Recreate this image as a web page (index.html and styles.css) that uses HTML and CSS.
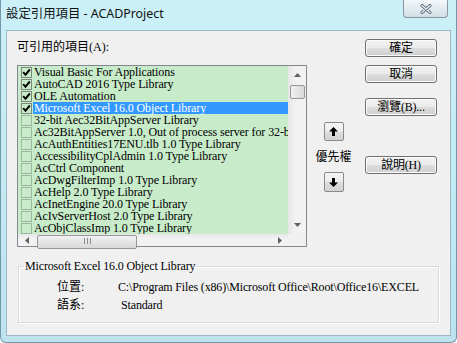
FILE: index.html
```html
<!DOCTYPE html>
<html>
<head>
<meta charset="utf-8">
<link rel="stylesheet" href="styles.css">
</head>
<body>
<div class="window">
  <div class="titlebar">
    <span class="title">設定引用項目 - ACADProject</span>
    <div class="close">
      <svg width="12" height="10" viewBox="0 0 12 10"><path d="M2 1.5 L10 8.5 M10 1.5 L2 8.5" stroke="#5d6c78" stroke-width="3" stroke-linecap="round"/><path d="M2 1.5 L10 8.5 M10 1.5 L2 8.5" stroke="#f4f6f8" stroke-width="1.2" stroke-linecap="round"/></svg>
    </div>
  </div>
  <div class="client">
    <div class="top">
      <div class="left">
        <div class="label">可引用的項目(A):</div>
        <div class="listbox">
          <div class="listmain">
            <div class="rows">
              <div class="row"><span class="cb on"><svg width="9" height="9" viewBox="0 0 9 9"><path d="M1.2 4.2 L3.5 6.8 L7.8 1.5" fill="none" stroke="#000" stroke-width="2"/></svg></span><span class="txt">Visual Basic For Applications</span></div>
              <div class="row"><span class="cb on"><svg width="9" height="9" viewBox="0 0 9 9"><path d="M1.2 4.2 L3.5 6.8 L7.8 1.5" fill="none" stroke="#000" stroke-width="2"/></svg></span><span class="txt">AutoCAD 2016 Type Library</span></div>
              <div class="row"><span class="cb on"><svg width="9" height="9" viewBox="0 0 9 9"><path d="M1.2 4.2 L3.5 6.8 L7.8 1.5" fill="none" stroke="#000" stroke-width="2"/></svg></span><span class="txt">OLE Automation</span></div>
              <div class="row sel"><span class="cb on"><svg width="9" height="9" viewBox="0 0 9 9"><path d="M1.2 4.2 L3.5 6.8 L7.8 1.5" fill="none" stroke="#000" stroke-width="2"/></svg></span><span class="txt">Microsoft Excel 16.0 Object Library</span></div>
              <div class="row"><span class="cb"></span><span class="txt">32-bit Aec32BitAppServer Library</span></div>
              <div class="row"><span class="cb"></span><span class="txt">Ac32BitAppServer 1.0, Out of process server for 32-bit</span></div>
              <div class="row"><span class="cb"></span><span class="txt">AcAuthEntities17ENU.tlb 1.0 Type Library</span></div>
              <div class="row"><span class="cb"></span><span class="txt">AccessibilityCplAdmin 1.0 Type Library</span></div>
              <div class="row"><span class="cb"></span><span class="txt">AcCtrl Component</span></div>
              <div class="row"><span class="cb"></span><span class="txt">AcDwgFilterImp 1.0 Type Library</span></div>
              <div class="row"><span class="cb"></span><span class="txt">AcHelp 2.0 Type Library</span></div>
              <div class="row"><span class="cb"></span><span class="txt">AcInetEngine 20.0 Type Library</span></div>
              <div class="row"><span class="cb"></span><span class="txt">AcIvServerHost 2.0 Type Library</span></div>
              <div class="row"><span class="cb"></span><span class="txt">AcObjClassImp 1.0 Type Library</span></div>
            </div>
            <div class="vscroll">
              <div class="sbtn"><svg width="7" height="4" viewBox="0 0 7 4"><path d="M3.5 0 L7 4 L0 4 Z" fill="#606060"/></svg></div>
              <div class="vthumb"></div>
              <div class="vspace"></div>
              <div class="sbtn"><svg width="7" height="4" viewBox="0 0 7 4"><path d="M0 0 L7 0 L3.5 4 Z" fill="#606060"/></svg></div>
            </div>
          </div>
          <div class="hbar">
            <div class="hscroll">
              <div class="hbtn"><svg width="4" height="7" viewBox="0 0 4 7"><path d="M0 3.5 L4 0 L4 7 Z" fill="#606060"/></svg></div>
              <div class="hthumb"><svg width="7" height="6" viewBox="0 0 7 6"><path d="M0.5 0 V6 M3.5 0 V6 M6.5 0 V6" stroke="#8a8a8a" stroke-width="1"/></svg></div>
              <div class="hspace"></div>
              <div class="hbtn"><svg width="4" height="7" viewBox="0 0 4 7"><path d="M0 0 L4 3.5 L0 7 Z" fill="#606060"/></svg></div>
            </div>
            <div class="corner"></div>
          </div>
        </div>
      </div>
      <div class="mid">
        <div class="abtn up"><svg width="9" height="9" viewBox="0 0 9 9"><path d="M4.5 0 L9 4.5 L6 4.5 L6 9 L3 9 L3 4.5 L0 4.5 Z" fill="#000"/></svg></div>
        <div class="prio">優先權</div>
        <div class="abtn down"><svg width="9" height="9" viewBox="0 0 9 9"><path d="M4.5 9 L9 4.5 L6 4.5 L6 0 L3 0 L3 4.5 L0 4.5 Z" fill="#000"/></svg></div>
      </div>
      <div class="right">
        <div class="btn b1">確定</div>
        <div class="btn b2">取消</div>
        <div class="btn b3">瀏覽(B)...</div>
        <div class="btn b4">說明(H)</div>
      </div>
    </div>
    <fieldset class="group">
      <legend>Microsoft Excel 16.0 Object Library</legend>
      <div class="info"><span class="k">位置:</span><span class="v">C:\Program Files (x86)\Microsoft Office\Root\Office16\EXCEL</span></div>
      <div class="info"><span class="k">語系:</span><span class="v pad">Standard</span></div>
    </fieldset>
  </div>
</div>
</body>
</html>
```

FILE: styles.css
```css
* { box-sizing: border-box; }
body {
  margin: 0;
  width: 457px;
  height: 343px;
  overflow: hidden;
  font-family: "Liberation Serif", "Noto Sans CJK TC", serif;
  font-size: 12px;
  color: #000;
}
.window {
  width: 457px;
  height: 343px;
  background: linear-gradient(180deg, #cbf0f8 0%, #c5ebf5 40%, #bde3ee 100%);
  padding: 0 5px;
  border: 1px solid #7396a8;
  border-top: none;
  border-radius: 0 0 6px 6px;
  display: flex;
  flex-direction: column;
}
.titlebar {
  height: 30px;
  display: flex;
  justify-content: space-between;
  align-items: flex-start;
  flex: none;
}
.title {
  font-family: "Noto Sans", "Noto Sans CJK TC", sans-serif;
  font-size: 12.4px;
  line-height: 16px;
  padding-top: 6px;
  color: #111;
}
.close {
  width: 45px;
  height: 18px;
  margin-right: 3px;
  border: 1px solid #8798a5;
  border-top: none;
  border-radius: 0 0 4px 4px;
  background: linear-gradient(180deg, #f4f8fa 0%, #e2ebf0 50%, #d3dee4 100%);
  display: flex;
  align-items: center;
  justify-content: center;
}
.client {
  width: 445px;
  height: 306px;
  background: #f0f0f0;
  border: 1px solid #9fb6c4;
  flex: none;
}
.top {
  display: flex;
  height: 216px;
}
.left {
  margin-left: 10px;
  width: 290px;
}
.label {
  margin-top: 9px;
  height: 14px;
  line-height: 14px;
}
.listbox {
  margin-top: 11px;
  width: 290px;
  height: 182px;
  border: 1px solid #828790;
  background: #c8ecca;
  display: flex;
  flex-direction: column;
}
.listmain {
  display: flex;
  height: 168px;
}
.rows {
  width: 270px;
  overflow: hidden;
}
.row {
  height: 12px;
  line-height: 12px;
  display: flex;
  align-items: center;
  padding-left: 3px;
  white-space: nowrap;
  letter-spacing: -0.1px;
}
.cb {
  width: 11px;
  height: 11px;
  flex: none;
  border: 1px solid #9db69f;
  display: flex;
  align-items: center;
  justify-content: center;
}
.cb.on {
  border-color: #7c8a7e;
}
.txt {
  flex: 1;
  height: 12px;
  padding-left: 1px;
  margin-left: 1px;
}
.sel .txt {
  background: #3399ff;
  color: #fff;
}
.vscroll {
  width: 18px;
  background: linear-gradient(90deg, #e6e6e6, #f2f2f2 40%, #f2f2f2);
  display: flex;
  flex-direction: column;
  align-items: center;
}
.sbtn {
  width: 17px;
  height: 18px;
  display: flex;
  align-items: center;
  justify-content: center;
  flex: none;
}
.vthumb {
  width: 15px;
  height: 14px;
  margin-top: 1px;
  border: 1px solid #979797;
  border-radius: 2px;
  background: linear-gradient(90deg, #f2f2f2, #e4e4e4 50%, #d8d8d8);
  flex: none;
}
.vspace { flex: 1; }
.hbar {
  display: flex;
  height: 12px;
}
.hscroll {
  width: 270px;
  display: flex;
  align-items: flex-start;
  background: linear-gradient(180deg, #e6e6e6, #f2f2f2 40%);
}
.hbtn {
  width: 17px;
  height: 12px;
  display: flex;
  align-items: center;
  justify-content: center;
  flex: none;
}
.hthumb {
  width: 100px;
  height: 14px;
  margin-left: 2px;
  margin-top: 1px;
  border: 1px solid #979797;
  border-radius: 2px;
  background: linear-gradient(180deg, #f2f2f2, #e4e4e4 50%, #d8d8d8);
  display: flex;
  justify-content: center;
  padding-top: 2px;
  flex: none;
}
.hspace { flex: 1; }
.corner {
  width: 18px;
  background: #f0f0f0;
}
.mid {
  margin-left: 8px;
  width: 37px;
  display: flex;
  flex-direction: column;
  align-items: center;
}
.abtn {
  width: 20px;
  height: 20px;
  border: 1px solid #8a8a8a;
  border-radius: 2px;
  background: linear-gradient(180deg, #f4f4f4 0%, #ececec 50%, #dedede 51%, #d2d2d2 100%);
  display: flex;
  align-items: center;
  justify-content: center;
}
.abtn.up { margin-top: 91px; height: 19px; }
.abtn.down { margin-top: 8px; }
.prio {
  margin-top: 9px;
  height: 14px;
  line-height: 14px;
  white-space: nowrap;
}
.right {
  margin-left: 13px;
  width: 72px;
  display: flex;
  flex-direction: column;
}
.btn {
  width: 72px;
  height: 18px;
  border: 1px solid #707070;
  border-radius: 3px;
  background: linear-gradient(180deg, #f2f2f2 0%, #ebebeb 50%, #dddddd 51%, #cfcfcf 100%);
  box-shadow: inset 0 0 0 1px #fbfbfb;
  display: flex;
  align-items: center;
  justify-content: center;
  line-height: 14px;
  letter-spacing: -0.2px;
}
.b1 { margin-top: 8px; }
.b2 { margin-top: 8px; }
.b3 { margin-top: 15px; }
.b4 { margin-top: 40px; }
.group {
  margin: 12px 0 0 11px;
  width: 421px;
  padding: 7px 0 10px 0;
  border: 1px solid #d5dadd;
  box-shadow: 1px 1px 0 #ffffff, inset 1px 1px 0 #ffffff;
}
.group legend {
  margin-left: 5px;
  padding: 0 1px;
  line-height: 14px;
  letter-spacing: -0.15px;
}
.info {
  display: flex;
  line-height: 14px;
  height: 14px;
  margin-bottom: 4px;
  margin-left: 38px;
  white-space: nowrap;
}
.info:last-child { margin-bottom: 0; }
.k { width: 61px; flex: none; }
.v { letter-spacing: -0.15px; }
.v.pad { padding-left: 3px; }
```
